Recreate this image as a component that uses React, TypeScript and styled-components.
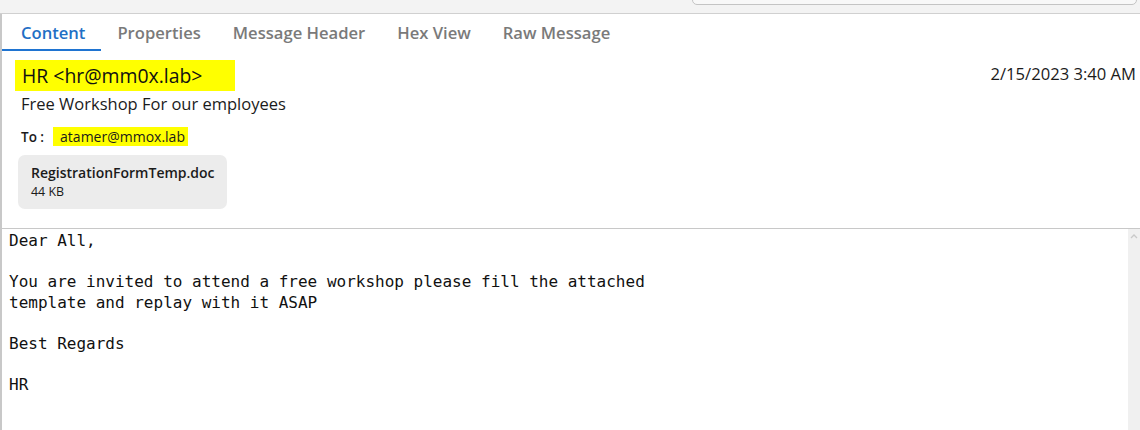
import * as React from 'react'
import styled, { createGlobalStyle } from 'styled-components'

const tabs = ['Content', 'Properties', 'Message Header', 'Hex View', 'Raw Message']

const bodyText = `Dear All,

You are invited to attend a free workshop please fill the attached
template and replay with it ASAP

Best Regards

HR`

const App = () => {
  const [active, setActive] = React.useState('Content')

  return (
    <>
      <GlobalStyle />
      <TopStrip>
        <SearchBox />
      </TopStrip>
      <Viewer>
        <TabBar>
          {tabs.map(t => (
            <Tab key={t} $active={t === active} onClick={() => setActive(t)}>
              {t}
            </Tab>
          ))}
        </TabBar>
        <Header>
          <HeaderTop>
            <Sender>HR &lt;hr@mm0x.lab&gt;</Sender>
            <DateText>2/15/2023 3:40 AM</DateText>
          </HeaderTop>
          <Subject>Free Workshop For our employees</Subject>
          <ToRow>
            <ToLabel>To :</ToLabel>
            <Recipient>atamer@mmox.lab</Recipient>
          </ToRow>
          <Attachment>
            <FileName>RegistrationFormTemp.doc</FileName>
            <FileSize>44 KB</FileSize>
          </Attachment>
        </Header>
        <BodyArea>
          <BodyText>{bodyText}</BodyText>
          <Scrollbar>
            <svg width="8" height="6" viewBox="0 0 8 6">
              <path d="M1 5 L4 2 L7 5" fill="none" stroke="#c9c9c9" strokeWidth="1.3" />
            </svg>
          </Scrollbar>
        </BodyArea>
      </Viewer>
    </>
  )
}

const GlobalStyle = createGlobalStyle`
  html, body {
    margin: 0;
    background: #ffffff;
    overflow: hidden;
  }
  body {
    font-family: "Open Sans", "Noto Sans", sans-serif;
    color: #1b1b1b;
  }
`

const TopStrip = styled.div`
  height: 13px;
  background: #f3f3f3;
  border-bottom: 1px solid #d0d0d0;
  overflow: hidden;

  display: flex;
  justify-content: flex-end;
`

const SearchBox = styled.div`
  width: 443px;
  height: 30px;
  margin-top: -27px;
  margin-right: 3px;
  border: 1px solid #c4c4c4;
  border-radius: 5px;
  background: #f8f8f8;
`

const Viewer = styled.div`
  height: 416px;
  border-left: 2px solid #c8c8c8;

  display: flex;
  flex-direction: column;
`

const TabBar = styled.div`
  height: 37px;
  padding-left: 3px;

  display: flex;
  align-items: stretch;
`

const Tab = styled.div<{ $active: boolean }>`
  position: relative;
  padding: 0 16px;
  font-size: 16.6px;
  font-weight: 600;
  line-height: 38px;
  color: ${p => (p.$active ? '#1f6fc5' : '#7a7a7a')};
  cursor: pointer;

  &::after {
    content: '';
    position: absolute;
    left: -3px;
    right: 0;
    bottom: 0;
    height: 2px;
    background: ${p => (p.$active ? '#1f74d1' : 'transparent')};
  }
`

const Header = styled.div`
  padding: 9px 4px 19px 13px;
  border-bottom: 1px solid #c8c8c8;

  display: flex;
  flex-direction: column;
  align-items: flex-start;
`

const HeaderTop = styled.div`
  align-self: stretch;

  display: flex;
  justify-content: space-between;
  align-items: flex-start;
`

const Sender = styled.div`
  background: #ffff00;
  height: 31px;
  padding: 0 33px 0 7px;
  font-size: 19.4px;
  line-height: 32px;
  color: #111;
`

const DateText = styled.div`
  margin-top: 3px;
  font-size: 16.6px;
  line-height: 22px;
  color: #1b1b1b;
`

const Subject = styled.div`
  margin: 0 0 0 6px;
  font-size: 16.5px;
  line-height: 25px;
`

const ToRow = styled.div`
  margin: 11px 0 0 6px;

  display: flex;
  align-items: center;
  gap: 9px;
`

const ToLabel = styled.span`
  font-size: 13.5px;
  font-weight: 600;
`

const Recipient = styled.span`
  background: #ffff00;
  padding: 0 3px 0 7px;
  font-size: 14px;
  line-height: 19px;
`

const Attachment = styled.div`
  margin: 9px 0 0 3px;
  width: 209px;
  height: 54px;
  box-sizing: border-box;
  padding: 8px 13px;
  background: #ececec;
  border-radius: 7px;

  display: flex;
  flex-direction: column;
`

const FileName = styled.span`
  font-size: 14px;
  font-weight: 600;
  line-height: 20px;
`

const FileSize = styled.span`
  font-size: 12.4px;
  line-height: 17px;
`

const BodyArea = styled.div`
  flex: 1;
  min-height: 0;

  display: flex;
`

const BodyText = styled.pre`
  flex: 1;
  margin: 0;
  padding: 2px 7px;
  font-family: "DejaVu Sans Mono", "Liberation Mono", monospace;
  font-size: 16px;
  line-height: 20.6px;
  color: #111;
`

const Scrollbar = styled.div`
  width: 12px;
  background: #f0f0f0;

  display: flex;
  justify-content: center;
  padding-top: 4px;
`

export default App
